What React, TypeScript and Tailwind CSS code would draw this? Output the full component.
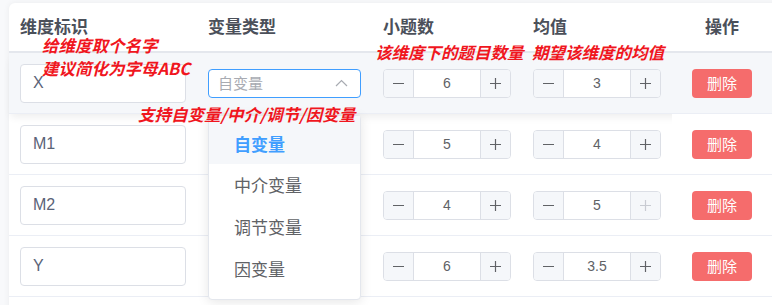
import React from "react";

const FONT = "font-['Liberation_Sans','Noto_Sans_CJK_SC',sans-serif]";

type Row = { name: string; count: number; mean: string; maxMean?: boolean };

const rows: Row[] = [
  { name: "X", count: 6, mean: "3" },
  { name: "M1", count: 5, mean: "4" },
  { name: "M2", count: 4, mean: "5", maxMean: true },
  { name: "Y", count: 6, mean: "3.5" },
];

function Minus() {
  return (
    <svg width="13" height="13" viewBox="0 0 13 13">
      <path d="M1 6.5H12" stroke="#606266" strokeWidth="1.2" />
    </svg>
  );
}

function Plus({ disabled }: { disabled?: boolean }) {
  const c = disabled ? "#c8cbd2" : "#606266";
  return (
    <svg width="13" height="13" viewBox="0 0 13 13">
      <path d="M1 6.5H12M6.5 1V12" stroke={c} strokeWidth="1.2" />
    </svg>
  );
}

function NumberInput({ value, plusDisabled }: { value: string; plusDisabled?: boolean }) {
  return (
    <div className="flex h-[29px] w-[128px] rounded-[4px] border border-[#dcdfe6] bg-white overflow-hidden">
      <div className="flex w-[30px] items-center justify-center bg-[#f5f7fa] border-r border-[#dcdfe6]">
        <Minus />
      </div>
      <div className="flex flex-1 items-center justify-center text-[14px] text-[#606266]">{value}</div>
      <div className="flex w-[30px] items-center justify-center bg-[#f5f7fa] border-l border-[#dcdfe6]">
        <Plus disabled={plusDisabled} />
      </div>
    </div>
  );
}

function Note({ className, children }: { className: string; children: React.ReactNode }) {
  return (
    <div
      className={`absolute z-40 whitespace-nowrap text-[16.5px] leading-[22px] font-bold italic text-[#f0161e] font-['Noto_Sans_CJK_SC',sans-serif] ${className}`}
    >
      {children}
    </div>
  );
}

export default function App() {
  return (
    <div className={`w-[772px] h-[305px] overflow-hidden bg-[#f8f9fb] pl-[9px] pt-[3px] ${FONT}`}>
      <div className="relative w-[780px] h-[320px] bg-white rounded-tl-[6px] shadow-[0_0_6px_rgba(0,0,0,0.06)]">
        {/* header */}
        <div className="grid grid-cols-[188px_175px_150px_150px_117px] h-[50px] border-b-2 border-[#e4e7ed] items-center text-[17px] font-bold text-[#4b505a] font-['Noto_Sans_CJK_SC',sans-serif]">
          <div className="pl-[11px] pb-[2px]">维度标识</div>
          <div className="pl-[11px] pb-[2px]">变量类型</div>
          <div className="pl-[11px] pb-[2px]">小题数</div>
          <div className="pl-[11px] pb-[2px]">均值</div>
          <div className="w-[100px] text-center pb-[2px]">操作</div>
        </div>

        {rows.map((r, i) => (
          <div
            key={r.name}
            className={`grid grid-cols-[188px_175px_150px_150px_117px] h-[61px] border-b border-[#ebeef5] items-center ${
              i === 0 ? "relative z-10 bg-[#f5f7fa] shadow-[0_5px_8px_-2px_rgba(0,0,0,0.07)]" : ""
            }`}
          >
            <div className="pl-[11px]">
              <div className="flex h-[39px] w-[166px] items-center rounded-[4px] border border-[#dcdfe6] bg-white pl-[12px] text-[16px] text-[#5a6378]">
                {r.name}
              </div>
            </div>
            <div className="pl-[11px]">
              {i === 0 && (
                <div className="flex h-[29px] w-[153px] items-center justify-between rounded-[4px] border border-[#409eff] bg-white pl-[9px] pr-[12px] text-[15px] text-[#a8abb2]">
                  <span className="font-['Noto_Sans_CJK_SC',sans-serif]">自变量</span>
                  <svg width="13" height="8" viewBox="0 0 13 8">
                    <path d="M1 7L6.5 1.5L12 7" fill="none" stroke="#a8abb2" strokeWidth="1.2" />
                  </svg>
                </div>
              )}
            </div>
            <div className="pl-[11px]">
              <NumberInput value={String(r.count)} />
            </div>
            <div className="pl-[11px]">
              <NumberInput value={r.mean} plusDisabled={r.maxMean} />
            </div>
            <div className={`flex h-full w-[117px] items-center ${i === 1 ? "relative z-20 bg-white" : ""}`}>
              <div className="flex w-[100px] justify-center">
                <button className="h-[29px] w-[60px] rounded-[4px] bg-[#f56c6c] text-[15px] text-white font-['Noto_Sans_CJK_SC',sans-serif]">
                  删除
                </button>
              </div>
            </div>
          </div>
        ))}

        {/* dropdown */}
        <div className="absolute left-[199px] top-[112px] z-30 w-[153px] rounded-[4px] border border-[#e4e7ed] bg-white pb-[9px] shadow-[0_2px_12px_rgba(0,0,0,0.1)] font-['Noto_Sans_CJK_SC',sans-serif] text-[17px]">
          <div className="flex h-[48px] items-center bg-[#f5f7fa] pl-[25px] pt-[8px] font-bold text-[#409eff]">自变量</div>
          <div className="flex h-[42px] items-center pl-[25px] text-[#606266]">中介变量</div>
          <div className="flex h-[42px] items-center pl-[25px] text-[#606266]">调节变量</div>
          <div className="flex h-[42px] items-center pl-[25px] text-[#606266]">因变量</div>
        </div>

        <Note className="left-[33px] top-[31px]">给维度取个名字</Note>
        <Note className="left-[33px] top-[54px]">建议简化为字母ABC</Note>
        <Note className="left-[129px] top-[100px]">支持自变量/中介/调节/因变量</Note>
        <Note className="left-[366px] top-[38px]">该维度下的题目数量</Note>
        <Note className="left-[523px] top-[38px]">期望该维度的均值</Note>
      </div>
    </div>
  );
}
